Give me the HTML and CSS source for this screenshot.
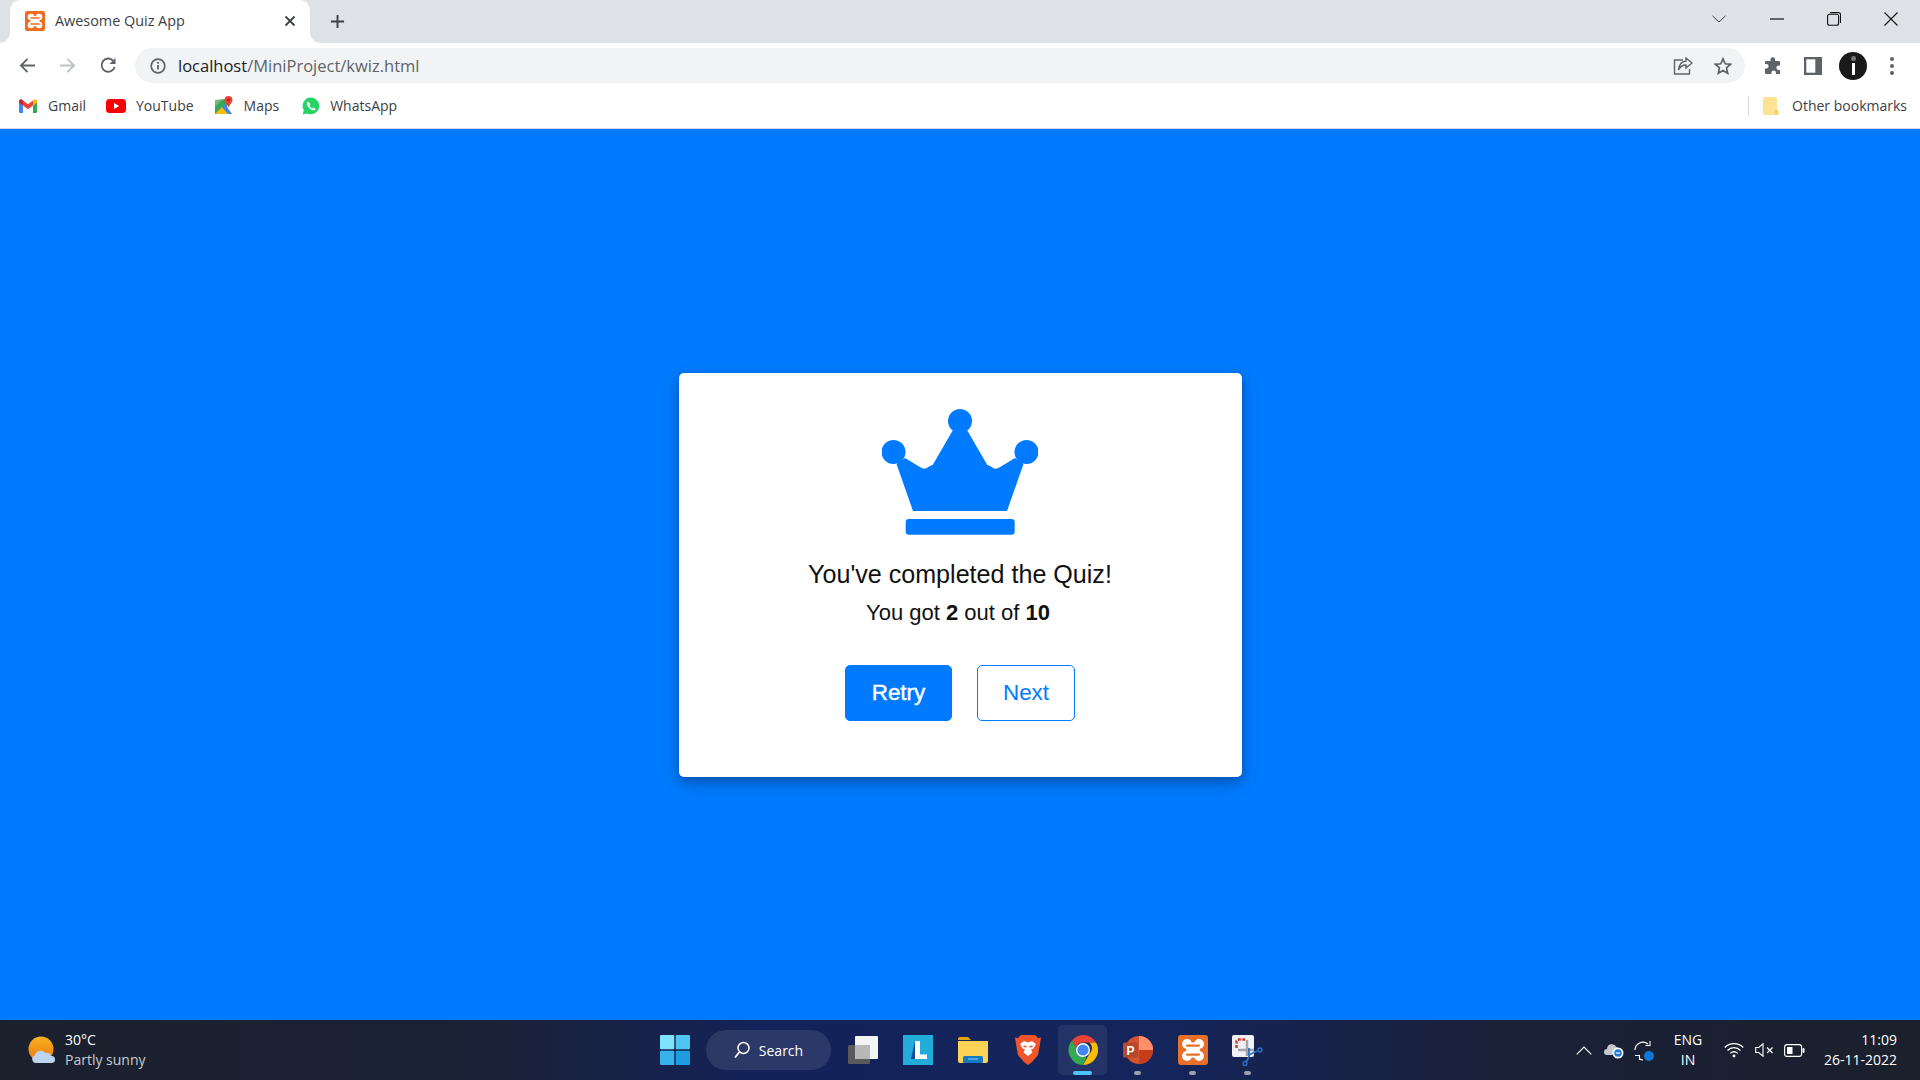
FILE: index.html
```html
<!DOCTYPE html>
<html lang="en">
<head>
  <meta charset="UTF-8">
  <title>Awesome Quiz App</title>
  <meta name="viewport" content="width=device-width, initial-scale=1">
  <link rel="stylesheet" href="styles.css">
</head>
<body>
  <div class="window">
    <!-- tab strip -->
    <div class="tabstrip">
      <div class="tab">
        <svg class="tab-icon" viewBox="0 0 20 20"><rect width="20" height="20" rx="2" fill="#ee6c22"/><circle cx="6" cy="6" r="3.300" fill="#fff"/><circle cx="14" cy="6" r="3.300" fill="#fff"/><circle cx="6" cy="14" r="3.300" fill="#fff"/><circle cx="14" cy="14" r="3.300" fill="#fff"/><rect x="5.500" y="5" width="9" height="10" fill="#fff"/><path d="M6 7h8M6 13h8" stroke="#ee6c22" stroke-width="1.500" stroke-linecap="round"/></svg>
        <span class="tab-title">Awesome Quiz App</span>
        <svg class="tab-close" viewBox="0 0 12 12"><path d="M1.500 1.500l9 9M10.500 1.500l-9 9" stroke="#3c4043" stroke-width="1.800"/></svg>
      </div>
      <svg class="new-tab" viewBox="0 0 16 16"><path d="M8 1v14M1 8h14" stroke="#3c4043" stroke-width="2"/></svg>
      <div class="window-controls">
        <button class="win-btn"><svg viewBox="0 0 14 8" width="14" height="8"><path d="M.5.800L7 7l6.500-6.200" fill="none" stroke="#3c4043"/></svg></button>
        <button class="win-btn win-narrow"><svg viewBox="0 0 14 2" width="14" height="2"><path d="M0 1h14" stroke="#111" stroke-width="1.200"/></svg></button>
        <button class="win-btn win-narrow"><svg viewBox="0 0 14 14" width="14" height="14"><rect x=".6" y="2.300" width="11" height="11" rx="2" fill="none" stroke="#111" stroke-width="1.100"/><path d="M3 .6h8.500a2 2 0 0 1 2 2V11" fill="none" stroke="#111" stroke-width="1.100"/></svg></button>
        <button class="win-btn"><svg viewBox="0 0 14 14" width="14" height="14"><path d="M.5.500l13 13M13.500.5l-13 13" stroke="#111" stroke-width="1.100"/></svg></button>
      </div>
    </div>

    <!-- toolbar -->
    <div class="toolbar">
      <svg class="nav-icon nav-back" viewBox="0 0 18 18"><path d="M17 9H2.500M9 2L2 9l7 7" fill="none" stroke="#5f6368" stroke-width="2"/></svg>
      <svg class="nav-icon nav-forward" viewBox="0 0 18 18"><path d="M1 9h14.500M9 2l7 7-7 7" fill="none" stroke="#bdc1c6" stroke-width="2"/></svg>
      <svg class="nav-icon nav-reload" viewBox="0 0 18 18"><path d="M15.500 10.500A7 7 0 1 1 14 4" fill="none" stroke="#5f6368" stroke-width="2"/><path d="M16.500 1v6.500H10z" fill="#5f6368"/></svg>
      <div class="omnibox">
        <svg class="info-icon" viewBox="0 0 16 16"><circle cx="8" cy="8" r="6.800" fill="none" stroke="#5f6368" stroke-width="1.700"/><path d="M8 7v4.500" stroke="#5f6368" stroke-width="1.800"/><circle cx="8" cy="4.800" r="1.100" fill="#5f6368"/></svg>
        <span class="url"><span class="url-host">localhost</span>/MiniProject/kwiz.html</span>
        <svg class="share-icon" viewBox="0 0 20 18"><path d="M10 3H1.500v14h15v-5" fill="none" stroke="#5f6368" stroke-width="1.400"/><path d="M13 1l6 5-6 5V8C9 8 7 10 5.500 13 6 8 8.500 4.500 13 4z" fill="#f1f3f4" stroke="#5f6368" stroke-width="1.400"/></svg>
        <svg class="star-icon" viewBox="0 0 18 18"><path d="M9 1.800l2.200 5 5.400.5-4.100 3.600 1.200 5.300L9 13.400l-4.700 2.800 1.200-5.300-4.100-3.600 5.400-.5z" fill="none" stroke="#5f6368" stroke-width="1.700"/></svg>
      </div>
      <svg class="puzzle-icon" viewBox="0 0 18 18"><path d="M6.500 2.500a2.300 2.300 0 0 1 4.600 0V4H15a1 1 0 0 1 1 1v3.500h-1.300a2.300 2.300 0 0 0 0 4.600H16V17H12v-1.300a2.300 2.300 0 0 0-4.600 0V17H2a1 1 0 0 1-1-1v-4.500h1.300a2.300 2.300 0 0 0 0-4.600H1V5a1 1 0 0 1 1-1h4.500z" fill="#5f6368"/></svg>
      <svg class="panel-icon" viewBox="0 0 18 18"><rect width="18" height="18" fill="#5f6368"/><rect x="2.300" y="2.300" width="9" height="13.400" fill="#fff"/></svg>
      <div class="avatar"><span class="avatar-dot"></span><span class="avatar-bar"></span></div>
      <div class="kebab"><span></span><span></span><span></span></div>
    </div>

    <!-- bookmarks bar -->
    <div class="bookmarks">
      <div class="bookmark bm-gmail">
        <svg viewBox="0 0 18 14" width="18" height="14"><path d="M1 14V3l8 6 8-6v11h-3.500V6.500L9 10 4.500 6.500V14z" fill="#fff"/><path d="M0 2.500V12.700C0 13.400.6 14 1.300 14H4V6.500z" fill="#4285f4"/><path d="M14 14h2.700c.7 0 1.300-.6 1.300-1.300V2.500L14 6.500z" fill="#34a853"/><path d="M14 1.500v5l4-3V2.200C18 .7 16.300-.2 15 .7z" fill="#fbbc04"/><path d="M4 6.500v-5L9 5.300l5-3.800v5L9 10.200z" fill="#ea4335"/><path d="M0 2.200v1.300l4 3v-5L3 .7C1.700-.2 0 .7 0 2.200z" fill="#c5221f"/></svg>
        <span>Gmail</span>
      </div>
      <div class="bookmark bm-youtube">
        <svg viewBox="0 0 20 14" width="20" height="14"><rect width="20" height="14" rx="3.500" fill="#f00"/><path d="M8 4l5.200 3L8 10z" fill="#fff"/></svg>
        <span>YouTube</span>
      </div>
      <div class="bookmark bm-maps">
        <svg viewBox="0 0 20 20" width="20" height="20"><path d="M1 4l12-1v14L1 18z" fill="#34a853"/><path d="M1 18l7-7 6 7z" fill="#fbbc04"/><path d="M8 11l3-3 7 10h-4z" fill="#4285f4"/><path d="M1 4h7L1 11z" fill="#7cb37c"/><path d="M14.500 0a4 4 0 0 1 4 4c0 2.500-2.500 4-4 7.500C13 8 10.500 6.500 10.500 4a4 4 0 0 1 4-4z" fill="#ea4335"/><circle cx="14.500" cy="4" r="1.400" fill="#a52714"/></svg>
        <span>Maps</span>
      </div>
      <div class="bookmark bm-whatsapp">
        <svg viewBox="0 0 18 18" width="18" height="18"><path d="M9 .5a8.400 8.400 0 0 0-7.200 12.700L.6 17.500l4.400-1.100A8.400 8.400 0 1 0 9 .5z" fill="#25d366"/><path d="M6 4.500c-.6.400-1.300 1.300-1 2.800.5 2.500 3.300 5.400 6 6 1.300.2 2.200-.4 2.700-1.300l-2.100-1.600-1.100 1c-1.300-.5-2.500-1.800-3-3l1-1.100z" fill="#fff"/></svg>
        <span>WhatsApp</span>
      </div>
      <div class="bookmarks-end">
        <svg viewBox="0 0 16 18" width="16" height="18"><path d="M2 0h10a2 2 0 0 1 2 2v14a2 2 0 0 1-2 2H2a2 2 0 0 1-2-2V2a2 2 0 0 1 2-2z" fill="#fde293"/><path d="M12 13h3.500v5H12z" fill="#f6d364"/></svg>
        <span>Other bookmarks</span>
      </div>
    </div>

    <!-- page -->
    <main class="page">
      <div class="result-box">
        <svg class="crown" viewBox="0 0 156 126">
          <circle cx="78" cy="12" r="12"/>
          <circle cx="11.500" cy="43" r="12"/>
          <circle cx="144.500" cy="43" r="12"/>
          <path d="M31 102L14.500 55 23 49l16.600 10c2 1 4.400 1 6-.5 2-1.500 4-2.500 5.100-2.500L71 21h14l20.300 35c1.100 0 3.100 1 5.100 2.500 1.600 1.500 4 1.500 6 .5L133 49l8.500 6L125 102z"/>
          <rect x="23.700" y="110" width="109" height="15.700" rx="3"/>
        </svg>
        <p class="complete-text">You've completed the Quiz!</p>
        <p class="score-text">You got <b>2</b> out of <b>10</b></p>
        <div class="buttons">
          <button class="btn btn-retry">Retry</button>
          <button class="btn btn-next">Next</button>
        </div>
      </div>
    </main>

    <!-- taskbar -->
    <footer class="taskbar">
      <div class="weather">
        <svg class="weather-icon" viewBox="0 0 28 28"><defs><linearGradient id="sun" x1="0" y1="0" x2="0" y2="1"><stop offset="0" stop-color="#fbb321"/><stop offset="1" stop-color="#e8770f"/></linearGradient></defs><circle cx="13" cy="13" r="12.500" fill="url(#sun)"/><path d="M8 27a4 4 0 0 1-1-7.800A6 6 0 0 1 17.500 17a4 4 0 0 1 5.500 3 3.500 3.500 0 0 1 1 7z" fill="#bcd4f2"/></svg>
        <div class="weather-text">
          <div class="temp">30°C</div>
          <div class="cond">Partly sunny</div>
        </div>
      </div>
      <div class="task-center">
        <div class="task-slot start-slot">
          <svg viewBox="0 0 30 30" width="30" height="30"><rect width="14.300" height="14.300" rx="1" fill="#7fe3fb"/><rect x="15.700" width="14.300" height="14.300" rx="1" fill="#4fc6f2"/><rect y="15.700" width="14.300" height="14.300" rx="1" fill="#36b2ec"/><rect x="15.700" y="15.700" width="14.300" height="14.300" rx="1" fill="#1f9be0"/></svg>
        </div>
        <div class="search-pill">
          <svg viewBox="0 0 16 18" width="16" height="18"><circle cx="9.500" cy="7" r="5.500" fill="none" stroke="#fff" stroke-width="1.500"/><path d="M5.500 11L1 16.500" stroke="#fff" stroke-width="1.800"/></svg>
          <span>Search</span>
        </div>
        <div class="task-slot">
          <svg viewBox="0 0 30 28" width="30" height="28"><rect x="0" y="9" width="22" height="19" rx="1.500" fill="#5a5a5c"/><rect x="7" y="0" width="23" height="23" rx="1" fill="#f4f4f4"/><rect x="7" y="9" width="15" height="14" fill="#b8b8b8"/></svg>
        </div>
        <div class="task-slot">
          <svg viewBox="0 0 30 30" width="30" height="30"><rect width="30" height="30" fill="#22acd8"/><path d="M8 24L12 6v18z" fill="#0f4c9c"/><path d="M12 6h5v13.500h7V24H12z" fill="#fff"/></svg>
        </div>
        <div class="task-slot">
          <svg viewBox="0 0 30 26" width="30" height="26"><path d="M0 2a2 2 0 0 1 2-2h8l3 3H0z" fill="#e3a40e"/><path d="M0 4h30v20a2 2 0 0 1-2 2H2a2 2 0 0 1-2-2z" fill="#fcd354"/><rect x="5" y="19" width="20" height="7" rx="1.500" fill="#1478c4"/><path d="M10 22h10" stroke="#7cc4f0" stroke-width="1.200"/></svg>
        </div>
        <div class="task-slot">
          <svg viewBox="0 0 26 30" width="26" height="30"><path d="M6 0h14l3 3 3-.5-1.500 9.500L23 20l-6 7-4 3-4-3-6-7-1.500-8L0 2.500 3 3z" fill="#f1542a"/><path d="M5 9l4-3 4 1.500L17 6l4 3-2.500 4.500-2.500 1 1.500 3L13 21l-4.500-3.500 1.500-3-2.500-1z" fill="#fff"/><path d="M8.500 11l3 1M17.500 11l-3 1" stroke="#f1542a" stroke-width="1.500"/></svg>
        </div>
        <div class="task-slot active">
          <svg viewBox="0 0 30 30" width="30" height="30"><path d="M15 0a15 15 0 0 1 13 7.500H15A7.500 7.500 0 0 0 8 12.600L4 5.500A15 15 0 0 1 15 0z" fill="#ea4335"/><path d="M28 7.500a15 15 0 0 1-13 22.500l6.500-11.200a7.500 7.500 0 0 0 0-11.300z" fill="#fbbc04"/><path d="M15 30A15 15 0 0 1 4 5.500l6.500 11.300a7.500 7.500 0 0 0 8 5.400z" fill="#34a853"/><circle cx="15" cy="15" r="7" fill="#fff"/><circle cx="15" cy="15" r="5.600" fill="#4285f4"/></svg>
          <span class="dash dash-active"></span>
        </div>
        <div class="task-slot">
          <svg viewBox="0 0 30 30" width="30" height="30"><circle cx="16" cy="15" r="14" fill="#d35230"/><path d="M16 1a14 14 0 0 1 14 14H16z" fill="#ff8f6b"/><path d="M16 15h14a14 14 0 0 1-14 14z" fill="#c43e1c"/><rect y="7.500" width="15" height="15" rx="1.500" fill="#b7472a"/><text class="ppt-letter" x="7.500" y="19.500" text-anchor="middle">P</text></svg>
          <span class="dash"></span>
        </div>
        <div class="task-slot">
          <svg viewBox="0 0 20 20" width="30" height="30"><rect width="20" height="20" rx="2" fill="#e8702a"/><circle cx="6" cy="6" r="3.300" fill="#fff"/><circle cx="14" cy="6" r="3.300" fill="#fff"/><circle cx="6" cy="14" r="3.300" fill="#fff"/><circle cx="14" cy="14" r="3.300" fill="#fff"/><rect x="5.500" y="5" width="9" height="10" fill="#fff"/><path d="M6 7h8M6 13h8" stroke="#e8702a" stroke-width="1.500" stroke-linecap="round"/></svg>
          <span class="dash"></span>
        </div>
        <div class="task-slot">
          <svg viewBox="0 0 31 31" width="31" height="31"><rect width="22" height="22" rx="2" fill="#f1f1f4"/><path d="M4.500 13V6a1.500 1.500 0 0 1 1.500-1.500h7" fill="none" stroke="#d9362b" stroke-width="2.500" stroke-dasharray="3 1.500"/><path d="M15 5v16M6 15h16" fill="none" stroke="#a4a4ac" stroke-width="2.500"/><path d="M17 13v9l-3 5M17 20l8-4" fill="none" stroke="#2a70c4" stroke-width="1.800"/><circle cx="13" cy="28.500" r="2" fill="none" stroke="#2a70c4" stroke-width="1.400"/><circle cx="28" cy="15" r="2" fill="none" stroke="#2a70c4" stroke-width="1.400"/></svg>
          <span class="dash"></span>
        </div>
      </div>
      <div class="tray">
        <div class="tray-item caret"><svg viewBox="0 0 16 9" width="16" height="9"><path d="M.7 8.300L8 1l7.300 7.300" fill="none" stroke="#fff" stroke-width="1.200"/></svg></div>
        <div class="tray-item"><svg viewBox="0 0 20 18" width="20" height="18"><path d="M3 14a3 3 0 0 1 0-6 5 5 0 0 1 9.500-2 3.500 3.500 0 0 1 3 3L8 14z" fill="#c5c8cc"/><circle cx="14" cy="12" r="5.500" fill="#fff"/><circle cx="14" cy="12" r="3.800" fill="#1c78d0"/><path d="M11.800 12h4.400" stroke="#fff" stroke-width="1.200"/></svg></div>
        <div class="tray-item"><svg viewBox="0 0 20 21" width="20" height="21"><path d="M1 10a8 8 0 0 1 13-6" fill="none" stroke="#fff" stroke-width="1.100"/><path d="M16 1v4.500h-4.500" fill="none" stroke="#fff" stroke-width="1.100"/><path d="M1 15.500h4.500V20M5 18.500A7 7 0 0 0 9 20" fill="none" stroke="#fff" stroke-width="1.100"/><circle cx="15" cy="16" r="5" fill="#0f78d4"/></svg></div>
        <div class="lang">ENG<br>IN</div>
        <div class="tray-item"><svg viewBox="0 0 20 16" width="20" height="16"><path d="M.7 5.500a13 13 0 0 1 18.600 0M3.500 8.500a9 9 0 0 1 13 0M6.300 11.400a5 5 0 0 1 7.400 0" fill="none" stroke="#fff" stroke-width="1.300"/><circle cx="10" cy="14" r="1.400" fill="#fff"/></svg></div>
        <div class="tray-item"><svg viewBox="0 0 19 14" width="19" height="14"><path d="M.7 4.500h3L8 .8v12.400L3.700 9.500h-3z" fill="none" stroke="#fff" stroke-width="1.100"/><path d="M12 4.500l5.500 5.500M17.500 4.500L12 10" stroke="#fff" stroke-width="1.200"/></svg></div>
        <div class="tray-item"><svg viewBox="0 0 21 13" width="21" height="13"><rect x=".6" y=".6" width="17" height="11.800" rx="2.500" fill="none" stroke="#fff" stroke-width="1.100"/><rect x="3" y="3" width="5.500" height="7" fill="#fff"/><rect x="18.500" y="4" width="2" height="5" rx="1" fill="#fff"/></svg></div>
        <div class="clock"><div>11:09</div><div>26-11-2022</div></div>
      </div>
    </footer>
  </div>
</body>
</html>
```

FILE: styles.css
```css
* {
  box-sizing: border-box;
}
body {
  margin: 0;
  font-family: 'Open Sans', 'Noto Sans', sans-serif;
  background: #007bff;
}
.window {
  display: flex;
  flex-direction: column;
  height: 100vh;
  overflow: hidden;
}

/* tab strip */
.tabstrip {
  display: flex;
  align-items: center;
  height: 43px;
  flex-shrink: 0;
  background: #dee1e6;
}
.tab {
  display: flex;
  align-items: center;
  align-self: stretch;
  width: 300px;
  margin-left: 10px;
  padding: 0 14px 2px 15px;
  background: #fff;
  border-radius: 10px 10px 0 0;
  position: relative;
}
.tab::before,
.tab::after {
  content: "";
  position: absolute;
  bottom: 0;
  width: 10px;
  height: 10px;
}
.tab::before {
  left: -10px;
  background: radial-gradient(circle at 0 0, #dee1e6 9.500px, #fff 10px);
}
.tab::after {
  right: -10px;
  background: radial-gradient(circle at 100% 0, #dee1e6 9.500px, #fff 10px);
}
.tab-icon {
  width: 20px;
  height: 20px;
  flex-shrink: 0;
}
.tab-title {
  flex: 1;
  margin-left: 10px;
  font-size: 14.400px;
  color: #3c4043;
}
.tab-close {
  width: 12px;
  height: 12px;
}
.new-tab {
  width: 15px;
  height: 15px;
  margin-left: 20px;
}
.window-controls {
  display: flex;
  margin-left: auto;
  align-self: flex-start;
}
.win-btn {
  display: flex;
  align-items: center;
  justify-content: center;
  width: 58px;
  height: 37px;
  padding: 0;
  border: none;
  background: none;
}
.win-narrow {
  width: 57px;
}

/* toolbar */
.toolbar {
  display: flex;
  align-items: center;
  height: 45px;
  flex-shrink: 0;
  padding-left: 19px;
  background: #fff;
}
.nav-icon {
  width: 17px;
  height: 17px;
}
.nav-forward {
  margin-left: 23px;
}
.nav-reload {
  margin-left: 24px;
}
.omnibox {
  display: flex;
  align-items: center;
  width: 1610px;
  height: 35px;
  margin-left: 18px;
  padding: 0 13px 0 15px;
  background: #f1f3f4;
  border-radius: 18px;
}
.info-icon {
  width: 16px;
  height: 16px;
}
.url {
  flex: 1;
  margin-left: 12px;
  font-size: 16.500px;
  color: #5f6368;
}
.url-host {
  color: #202124;
}
.share-icon {
  width: 20px;
  height: 18px;
  margin-right: 21px;
}
.star-icon {
  width: 18px;
  height: 18px;
}
.puzzle-icon {
  width: 18px;
  height: 18px;
  margin-left: 19px;
}
.panel-icon {
  width: 18px;
  height: 18px;
  margin-left: 22px;
}
.avatar {
  display: flex;
  flex-direction: column;
  align-items: center;
  justify-content: center;
  gap: 2px;
  width: 28px;
  height: 28px;
  margin-left: 17px;
  background: #1a1a1a;
  border-radius: 50%;
}
.avatar-dot {
  width: 5px;
  height: 5px;
  background: #777;
  border-radius: 50%;
}
.avatar-bar {
  width: 3px;
  height: 12px;
  background: #fff;
}
.kebab {
  display: flex;
  flex-direction: column;
  gap: 3px;
  margin-left: 23px;
}
.kebab span {
  width: 4px;
  height: 4px;
  background: #5f6368;
  border-radius: 50%;
}

/* bookmarks */
.bookmarks {
  display: flex;
  align-items: center;
  height: 41px;
  flex-shrink: 0;
  padding: 0 0 5px 19px;
  background: #fff;
  border-bottom: 1px solid #d5d8dc;
  font-size: 14px;
  color: #3c4043;
}
.bookmark {
  display: flex;
  align-items: center;
}
.bm-gmail span {
  margin-left: 11px;
}
.bm-youtube {
  margin-left: 20px;
}
.bm-youtube span {
  margin-left: 10px;
}
.bm-maps {
  margin-left: 20px;
}
.bm-maps span {
  margin-left: 10px;
}
.bm-whatsapp {
  margin-left: 23px;
}
.bm-whatsapp span {
  margin-left: 10px;
}
.bookmarks-end {
  display: flex;
  align-items: center;
  height: 20px;
  margin-left: auto;
  padding: 0 13px 0 14px;
  border-left: 1px solid #d5d8dc;
}
.bookmarks-end span {
  margin-left: 13px;
}

/* quiz result */
.page {
  flex: 1;
  display: flex;
  align-items: center;
  justify-content: center;
  padding-top: 1px;
  background: #007bff;
}
.result-box {
  display: flex;
  flex-direction: column;
  align-items: center;
  width: 563px;
  height: 404px;
  padding-top: 36px;
  background: #fff;
  border-radius: 5px;
  box-shadow: 0 4px 8px 0 rgba(0, 0, 0, 0.2), 0 6px 20px 0 rgba(0, 0, 0, 0.19);
  font-family: 'Liberation Sans', Arial, sans-serif;
  color: #000;
}
.crown {
  width: 156px;
  height: 126px;
  fill: #007bff;
}
.complete-text {
  margin: 24px 0 0;
  font-size: 25.100px;
  line-height: 30px;
  color: #111;
}
.score-text {
  margin: 10px 0 0;
  padding-right: 4px;
  font-size: 22px;
  line-height: 28px;
  color: #111;
}
.buttons {
  display: flex;
  gap: 25px;
  margin-top: 38px;
}
.btn {
  height: 56px;
  padding: 0 0 1px;
  border: 1px solid #007bff;
  border-radius: 5px;
  font-family: inherit;
  font-size: 22.400px;
}
.btn-retry {
  width: 107px;
  background: #007bff;
  color: #fff;
  -webkit-text-stroke: 0.4px #fff;
}
.btn-next {
  width: 98px;
  background: #fff;
  color: #007bff;
}

/* taskbar */
.taskbar {
  display: grid;
  grid-template-columns: 660px auto 1fr;
  align-items: center;
  height: 60px;
  flex-shrink: 0;
  background: linear-gradient(90deg, #1b202d 0%, #1b2136 25%, #13235a 40%, #14255c 60%, #1a2038 78%, #1b202c 100%);
  color: #fff;
}
.weather {
  display: flex;
  align-items: center;
  padding-left: 28px;
}
.weather-icon {
  width: 28px;
  height: 28px;
}
.weather-text {
  margin-left: 9px;
  font-size: 14px;
  line-height: 20px;
}
.cond {
  color: #c8cacf;
}
.task-center {
  display: flex;
  align-items: center;
}
.task-slot {
  position: relative;
  display: flex;
  align-items: center;
  justify-content: center;
  width: 55px;
  height: 50px;
}
.start-slot {
  width: 30px;
}
.task-slot.active::before {
  content: "";
  position: absolute;
  left: 3px;
  right: 3px;
  top: 0;
  bottom: 0;
  background: rgba(255, 255, 255, 0.07);
  border-radius: 5px;
}
.task-slot svg {
  position: relative;
}
.search-pill {
  display: flex;
  align-items: center;
  justify-content: center;
  gap: 9px;
  width: 125px;
  height: 40px;
  margin: 0 4px 0 16px;
  background: rgba(255, 255, 255, 0.1);
  border-radius: 20px;
  font-size: 14px;
}
.dash {
  position: absolute;
  bottom: 0;
  left: 24px;
  width: 7px;
  height: 4px;
  background: #9aa0ad;
  border-radius: 2px;
}
.dash-active {
  left: 18px;
  width: 19px;
  background: #4cc2ff;
}
.ppt-letter {
  font-family: 'Liberation Sans', sans-serif;
  font-size: 12px;
  font-weight: bold;
  fill: #fff;
}
.tray {
  display: flex;
  align-items: center;
  padding-right: 23px;
}
.tray-item {
  display: flex;
  align-items: center;
  justify-content: center;
  width: 30px;
}
.caret {
  margin-left: auto;
}
.lang {
  width: 44px;
  margin: 0 9px 0 7px;
  font-size: 14px;
  line-height: 20px;
  text-align: center;
}
.clock {
  width: 88px;
  font-size: 14px;
  line-height: 20px;
  text-align: right;
}
```
